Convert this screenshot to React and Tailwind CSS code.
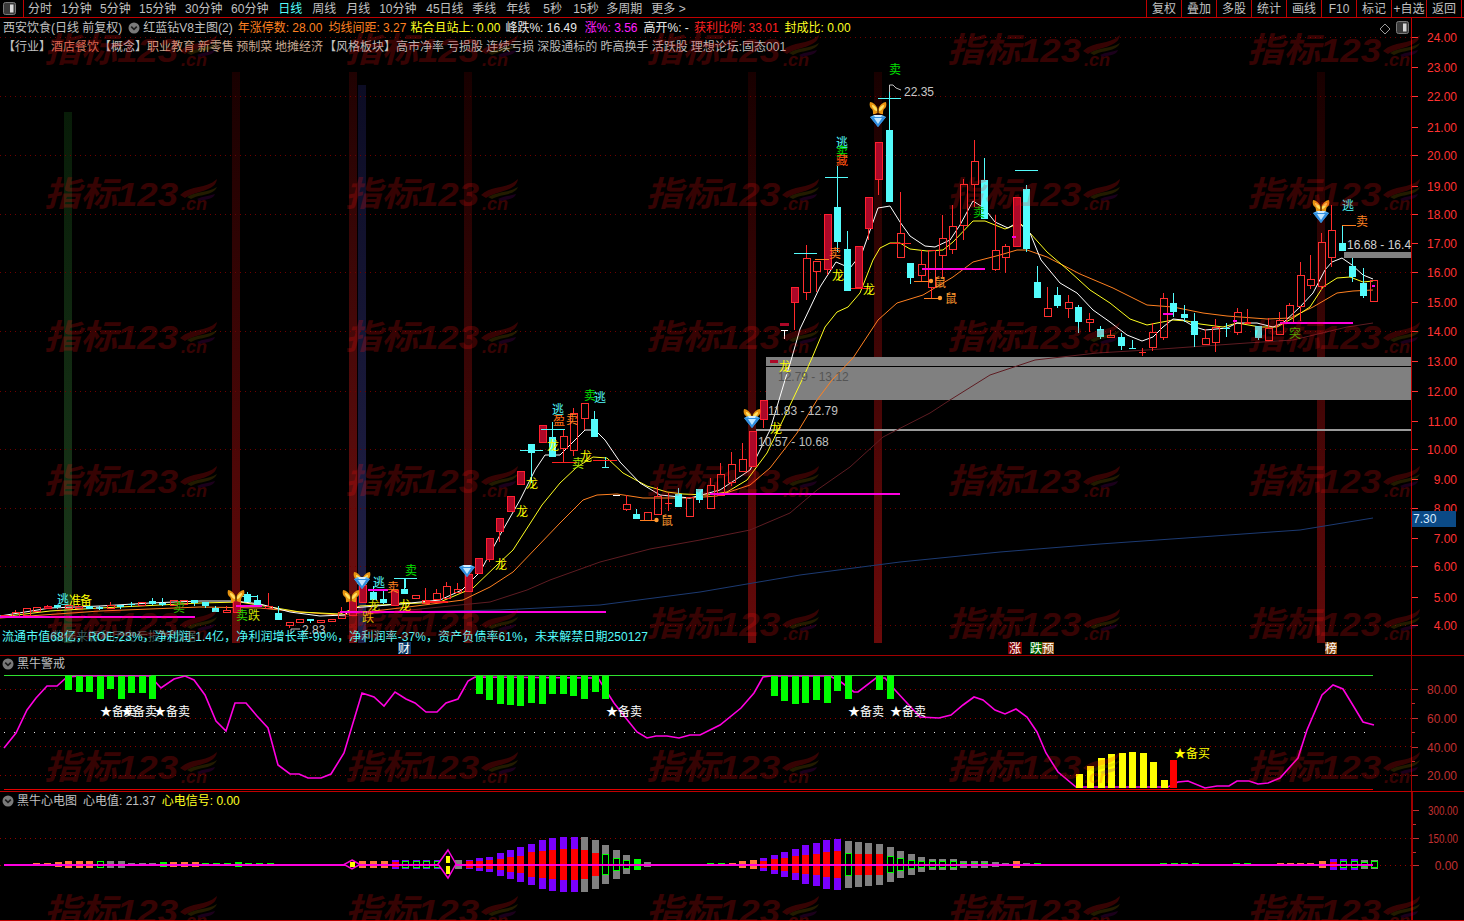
import React from "react";

const RED = "#ff3232";
const CYAN = "#54fcfc";

const candles = [
  [4,615,615,617,617,"r"],[15,610,612,616,616,"r"],[26,608,608,615,615,"r"],[36,607,607,611,611,"r"],[47,605,606,608,609,"f"],
  [57,605,605,608,609,"c"],[68,604,605,608,609,"r"],[78,605,606,608,608,"r"],[89,605,606,609,609,"c"],[99,606,607,609,610,"c"],
  [110,602,605,608,608,"r"],[120,605,605,607,609,"c"],[131,602,604,605,607,"c"],[141,602,602,605,605,"r"],[152,598,601,604,605,"c"],
  [162,598,603,605,606,"c"],[173,600,600,605,605,"r"],[183,600,600,604,604,"r"],[194,600,600,603,606,"c"],[205,602,602,606,608,"c"],
  [215,606,608,612,612,"c"],[226,606,610,612,612,"r"],[236,597,597,612,613,"f"],[247,592,594,602,602,"c"],[257,595,600,605,605,"c"],
  [268,593,606,608,608,"r"],[278,606,613,620,620,"c"],[289,622,622,625,628,"r"],[299,619,619,622,622,"r"],[310,619,619,621,623,"c"],
  [320,620,620,622,622,"r"],[331,619,619,621,621,"r"],[341,607,612,618,618,"r"],[352,598,598,615,615,"f"],[362,585,585,602,602,"f"],
  [373,586,592,600,600,"c"],[383,590,599,603,604,"c"],[394,590,590,605,605,"f"],[404,578,589,594,594,"c"],[415,595,595,598,598,"r"],
  [425,588,600,603,603,"r"],[436,589,593,599,599,"r"],[446,582,586,598,598,"r"],[457,583,589,592,592,"r"],[468,574,574,591,591,"f"],
  [478,558,558,573,573,"f"],[489,538,538,559,562,"f"],[499,518,518,531,542,"f"],[510,496,496,511,511,"f"],[520,471,471,484,484,"f"],
  [531,444,444,453,483,"c"],[542,425,425,442,442,"f"],[552,422,437,457,457,"c"],[563,430,436,448,463,"r"],[573,408,413,450,456,"r"],
  [584,403,403,418,430,"r"],[594,411,419,437,437,"c"],[605,457,467,468,468,"c"],[616,495,495,496,496,"w"],[626,495,504,509,511,"r"],
  [636,509,514,519,519,"c"],[647,512,512,520,520,"r"],[657,487,496,514,514,"r"],[668,493,503,503,511,"r"],[678,488,494,507,507,"c"],
  [689,497,497,516,516,"r"],[699,489,489,500,503,"c"],[710,478,485,508,508,"r"],[720,463,474,495,495,"r"],[731,452,464,482,486,"r"],
  [742,443,459,471,471,"r"],[752,431,431,466,466,"f"],[763,400,400,419,428,"f"],
  [794,287,287,302,330,"f"],[806,245,258,292,300,"r"],[816,261,261,271,292,"r"],[827,214,214,269,275,"f"],[837,166,207,242,252,"c"],
  [847,231,249,291,291,"c"],[858,246,246,287,287,"f"],[868,197,197,228,240,"f"],[878,142,142,179,195,"f"],[889,85,130,202,202,"c"],
  [900,192,233,257,257,"r"],[910,263,263,278,284,"c"],[921,250,264,275,282,"r"],[931,250,250,287,298,"r"],[942,215,238,255,277,"r"],
  [952,205,226,249,254,"r"],[963,179,184,225,240,"r"],[974,140,161,184,207,"r"],[984,158,180,219,219,"c"],[995,215,250,269,271,"r"],
  [1005,244,246,257,273,"r"],[1016,197,197,246,246,"f"],[1026,185,189,249,252,"c"],[1037,266,282,298,298,"c"],[1047,287,308,316,316,"r"],
  [1057,287,295,306,308,"c"],[1068,295,302,308,318,"r"],[1078,305,307,322,333,"c"],[1089,313,319,322,332,"r"],[1100,326,329,337,339,"c"],
  [1110,330,335,337,337,"r"],[1121,333,337,346,350,"c"],[1132,340,348,349,349,"c"],[1142,348,352,352,356,"r"],[1152,323,332,347,351,"r"],
  [1163,293,298,337,340,"r"],[1173,293,303,312,317,"c"],[1184,305,314,318,322,"c"],[1194,313,321,335,347,"c"],[1205,329,338,344,344,"r"],
  [1215,319,327,342,352,"r"],[1226,323,328,329,337,"c"],[1237,308,312,332,335,"r"],[1247,309,323,324,324,"r"],[1258,326,326,338,340,"c"],
  [1268,318,328,340,340,"r"],[1279,312,320,334,334,"r"],[1289,303,305,322,322,"r"],[1300,262,275,306,321,"r"],[1310,255,279,285,289,"r"],
  [1321,233,242,286,290,"r"],[1331,205,230,257,267,"r"],[1342,225,243,251,251,"c"],[1352,258,266,277,282,"c"],[1363,268,283,296,298,"c"],
  [1373,280,280,301,301,"r"],
];

const white = "0,616 50,608 100,606 150,603 200,601 235,601 260,604 290,612 320,616 345,615 352,608 400,604 440,600 462,590 480,572 500,535 520,500 535,470 545,455 560,455 575,440 585,430 595,430 605,440 620,462 640,483 660,495 690,498 720,490 750,470 770,430 785,380 792,357 800,329 820,287 836,262 850,268 862,253 878,208 890,206 900,222 910,236 925,246 935,247 950,240 960,225 973,201 984,208 995,222 1008,228 1018,222 1030,233 1041,260 1060,283 1077,293 1093,310 1110,322 1127,335 1142,341 1153,337 1163,327 1173,319 1183,320 1195,327 1205,330 1227,328 1237,323 1257,323 1273,327 1283,323 1300,307 1313,293 1325,270 1332,262 1342,258 1352,265 1363,275 1373,279";
const yellow = "0,617 50,611 100,608 200,603 240,602 270,607 300,612 340,614 360,606 400,604 440,602 473,588 497,565 513,550 542,505 560,483 577,467 593,457 607,458 623,473 647,486 667,492 683,494 707,495 727,492 747,480 767,453 783,420 802,380 812,358 825,327 837,312 848,307 860,293 873,260 880,248 890,243 900,243 910,249 927,251 943,250 953,242 973,221 985,221 1005,229 1020,223 1030,233 1047,252 1068,270 1090,290 1110,303 1130,319 1147,325 1157,323 1173,320 1187,321 1200,324 1223,327 1237,323 1260,327 1277,327 1293,318 1310,307 1323,287 1337,278 1350,277 1363,282 1373,281";
const orange = "0,618 100,611 200,607 260,608 300,612 340,615 400,608 440,603 463,600 490,587 513,572 537,547 560,523 583,500 597,495 617,494 643,498 667,498 690,498 717,496 750,485 770,468 797,433 817,400 832,380 853,358 878,320 897,303 923,295 953,277 973,262 1000,255 1017,250 1027,250 1047,257 1080,274 1113,288 1147,305 1173,307 1203,313 1227,316 1267,319 1290,318 1313,307 1337,293 1353,291 1373,290";
const maroon = "340,617 440,607 490,602 527,590 550,580 600,562 650,549 700,540 750,530 790,513 817,490 850,467 883,437 930,413 950,400 990,375 1035,360 1097,353 1147,350 1247,343 1293,340 1347,327 1373,323";
const navy = "400,612 500,610 600,605 700,592 800,575 900,562 1000,552 1100,544 1200,537 1300,530 1373,518";

const bars = [[68,112,"#081c08","#1c3a1c"],[236,72,"#180000","#660a0a"],[353,72,"#200202","#741010"],[362,85,"#0c0c24","#22224a"],[468,72,"#180000","#5a0a0a"],[752,72,"#180000","#660a0a"],[878,72,"#180000","#6c0a0a"],[1321,72,"#180000","#620a0a"]];

const hLines = [
  [237,258,596,CYAN],[394,417,578,CYAN],[520,543,450,CYAN],[541,565,429,CYAN],[794,817,253,CYAN],[825,848,177,CYAN],[878,901,98,CYAN],[1015,1038,170,CYAN],
  [552,577,462,"#ff2020"],[593,617,460,"#ff2020"],[890,911,243,"#ff2020"],[851,870,288,"#ff2020"],
  [815,829,259,"#ff8020"],[1342,1356,225,"#ff8020"],[914,931,281,"#ff8020"],[924,940,298,"#ff8020"],[640,656,520,"#ff8020"],
];
const magentaLines = [[0,195,617],[236,262,606],[340,606,612.5],[710,900,494.5],[922,985,269],[1280,1353,323],[1163,1173,314],[1233,1237,321],[1372,1375,286],[1012,1016,237],[368,388,590]];

const labels = [
  [57,599,"逃",CYAN],[69,600,"准","#ffff00"],[80,600,"备","#ffff00"],[173,607,"卖","#30b000"],[236,615,"卖","#30d000"],[248,615,"跌","#d0e000"],
  [405,570,"卖","#00e000"],[387,587,"卖","#ff8020"],[373,582,"逃",CYAN],[399,605,"龙","#ffff00"],[362,617,"跌","#e0c000"],[368,605,"龙","#e0e000"],
  [552,409,"逃",CYAN],[553,420,"盈","#ff6a10"],[566,419,"卖","#ff8020"],[584,395,"卖","#00e000"],[594,397,"逃",CYAN],[526,483,"龙","#ffff00"],[516,511,"龙","#ffff00"],[495,564,"龙","#ffff00"],[580,456,"龙","#ffff00"],[572,463,"卖","#a0e000"],[547,445,"龙","#ffff00"],
  [661,520,"鼠","#ff9a30"],[770,428,"龙","#ffff00"],[779,366,"龙","#ffff00"],
  [889,69,"卖","#00e000"],[836,142,"逃",CYAN],[836,151,"卖","#00e000"],[836,160,"藏","#ff5010"],[829,253,"卖","#ff8020"],[832,275,"龙","#ffff00"],[863,289,"龙","#ffff00"],[973,212,"卖","#00c000"],
  [934,282,"鼠","#ff9a30"],[945,298,"鼠","#ff9a30"],[1342,205,"逃",CYAN],[1356,221,"卖","#ff8020"],[1289,333,"突","#30c000"],
];

const grid = [37,96,155,214,272,331,391,449,508,566,625];
const axisMain = [[24,37],[23,67],[22,96],[21,127],[20,155],[19,186],[18,214],[17,243],[16,272],[15,302],[14,331],[13,361],[12,391],[11,421],[10,449],[9,479],[8,508],[7,538],[6,566],[5,597],[4,625]];

const curve = "4,748 16,733 27,710 36,698 47,686 57,686 67,677 80,676 150,676 161,688 174,679 185,676 194,680 205,695 216,721 226,731 235,703 246,703 257,716 268,728 278,765 290,774 299,774 308,778 321,778 331,774 344,753 362,693 374,697 384,706 395,692 406,699 415,703 426,712 437,712 446,703 458,699 468,681 475,677 598,678 614,703 625,717 637,732 647,738 656,736 667,736 679,738 690,735 700,735 720,725 741,708 754,693 763,677 771,676 830,676 841,682 854,692 858,692 876,678 885,678 895,690 907,703 920,717 939,718 951,715 963,705 974,697 983,700 995,710 1005,714 1016,709 1027,717 1037,732 1046,753 1058,772 1076,787 1168,787 1178,782 1188,781 1205,788 1217,786 1229,786 1237,781 1249,781 1258,784 1268,783 1280,778 1298,758 1307,730 1322,695 1333,685 1343,689 1354,707 1363,722 1374,725";
const greenBars = [[68,690],[79,692],[89,692],[100,699],[110,689],[121,699],[131,693],[142,693],[152,699],[479,694],[489,700],[500,704],[510,705],[520,706],[531,703],[542,704],[552,694],[563,694],[573,696],[584,699],[595,692],[605,699],[774,696],[784,701],[795,704],[805,703],[816,700],[827,703],[837,691],[848,699],[879,690],[890,699]];
const yellowBars = [[1079,774],[1090,766],[1101,758],[1111,754],[1122,753],[1132,752],[1143,753],[1153,762],[1164,780]];

const O="#ff7a3c",P="#7b00ff",G="#808080",R="#ff0000",L="#00ff00";
const ecg = [
  [36,1,O],[47,1,O],[58,2,O],[68,3,O],[79,3,O],[89,3,O],[100,3,G,3,"h"],[110,3,G],[121,3,G],[131,1,G],[142,1,G],[152,1,G],[163,2,L],[173,2,O],[184,2,O],[195,2,O],[205,1,L],[216,1,L],[227,1,L],[238,2,L],[248,1,L],[259,1,L],[270,1,L],
  [362,3,O],[373,3,O],[384,3,O],[395,4,P,2,"r"],[405,4,P,3,"h"],[416,4,P,3,"h"],[426,4,P,3,"h"],[437,4,P,3,"h"],[458,4,G],[469,4,P,3,"r"],[479,6,P,3,"r"],[489,7,P,4,"r"],[500,11,P,5,"r"],[510,14,P,7,"r"],[520,17,P,8,"r"],[531,20,P,12,"r"],[542,24,P,13,"r"],[552,26,P,14,"r"],[563,27,P,15,"r"],[574,27,P,15,"r"],[584,27,G,14,"r"],[595,24,G,11,"r"],[605,19,G,10,"h"],[616,14,G,6,"h"],[626,9,G,4,"h"],[637,5,L],[647,2,G],
  [710,1,L],[721,1,L],[732,1,O],[742,3,O],[753,4,O],[763,6,P,3,"r"],[774,9,P,5,"r"],[784,12,P,6,"r"],[795,15,P,8,"r"],[805,19,P,9,"r"],[816,21,P,10,"r"],[826,24,P,12,"r"],[837,25,P,13,"r"],[848,23,G,11,"h"],[858,22,G,10,"r"],[868,21,G,10,"r"],[879,20,G,10,"r"],[890,17,G,8,"h"],[900,13,G,6,"h"],[911,10,G,4,"h"],[921,7,G,3,"h"],[932,5,G,3,"h"],[942,5,G,3,"h"],[953,5,G,3,"h"],[963,3,G,1,"h"],[974,3,G,1,"h"],[984,3,G,1,"h"],[995,2,G],[1005,1,G],[1016,3,O],[1026,1,G],[1037,1,L],
  [1163,1,L],[1174,1,L],[1184,1,L],[1195,1,L],[1236,1,L],[1247,1,L],[1280,1,O],[1290,1,O],[1300,1,O],[1310,1,O],[1322,3,O],[1333,5,P,2,"r"],[1343,5,P,3,"h"],[1354,5,P,3,"h"],[1364,4,G,2,"h"],[1374,4,G,3,"h"],
];

function Chevron() {
  return (
    <svg width="12" height="12" viewBox="0 0 12 12" className="shrink-0">
      <circle cx="6" cy="6" r="5.5" fill="#7a7a7a" />
      <path d="M3.2 4.6 6 7.4 8.8 4.6" fill="none" stroke="#1c1c1c" strokeWidth="1.6" />
    </svg>
  );
}

function WinIcon() {
  return (
    <svg width="13" height="13" viewBox="0 0 13 13">
      <rect x="0.5" y="0.5" width="12" height="12" rx="2" fill="#3a3a3a" stroke="#7a7a7a" />
      <rect x="7" y="2.5" width="3.5" height="8" fill="#d8d8d8" />
    </svg>
  );
}

function Butterfly({ x, y }) {
  return (
    <g transform={`translate(${x} ${y})`}>
      <path d="M0 5 C-2 5 -4 7 -5 6 C-5 4 -5 2 -6 1 C-8 0 -9 -3 -8 -6 C-5 -6 -2 -3 0 1 Z" fill="#e89410" />
      <path d="M0 5 C2 5 4 7 5 6 C5 4 5 2 6 1 C8 0 9 -3 8 -6 C5 -6 2 -3 0 1 Z" fill="#e89410" />
      <path d="M-1 3 C-3 3 -4 1 -5 0 C-6 -1 -6 -2 -6 -3 C-4 -3 -2 -1 -1 1 Z M1 3 C3 3 4 1 5 0 C6 -1 6 -2 6 -3 C4 -3 2 -1 1 1 Z" fill="#ffe060" />
      <rect x="-0.6" y="-2" width="1.2" height="7" fill="#3a1800" />
    </g>
  );
}

function Diamond({ x, y }) {
  return (
    <g transform={`translate(${x} ${y})`}>
      <path d="M-8 -4 L-4 -6 L4 -6 L8 -4 L0 6 Z" fill="#5ab4f4" />
      <path d="M-8 -4 L8 -4 L0 6 Z" fill="#2f8ee0" />
      <path d="M-4 -3 L4 -3 L0 3 Z" fill="#bfe6ff" />
      <path d="M-4 -6 L4 -6 L3 -4 L-3 -4 Z" fill="#d4eeff" />
    </g>
  );
}

function Lbl({ x, y, c, children, size = 12, spacing }) {
  return (
    <text x={x} y={y + 5} fill={c} fontSize={size} letterSpacing={spacing}>
      {children}
    </text>
  );
}

function Candle({ d }) {
  const [x, wt, bt, bb, wb, t] = d;
  const col = t === "c" ? CYAN : t === "w" ? "#ffffff" : "#ff2a2a";
  const left = Math.round(x - 3.5);
  const mid = left + 3.5;
  const flat = bb - bt < 2;
  return (
    <g shapeRendering="crispEdges">
      {wt < bt && <line x1={mid} x2={mid} y1={wt} y2={bt} stroke={col} />}
      {wb > bb && <line x1={mid} x2={mid} y1={bb} y2={wb} stroke={col} />}
      {flat ? (
        <line x1={left} x2={left + 7} y1={bt + 0.5} y2={bt + 0.5} stroke={col} />
      ) : t === "c" ? (
        <rect x={left} y={bt} width="7" height={bb - bt} fill={CYAN} />
      ) : t === "f" ? (
        <rect x={left + 0.5} y={bt + 0.5} width="7" height={bb - bt} fill="#ac0828" stroke="#ff2030" />
      ) : (
        <rect x={left + 0.5} y={bt + 0.5} width="7" height={bb - bt} fill="none" stroke="#ff3030" />
      )}
    </g>
  );
}

function MainSvg() {
  return (
    <svg viewBox="0 18 1411 637" width="1411" height="637" className="absolute left-0 top-0" fontWeight="400">
      <defs>
        {bars.map((b, i) => (
          <linearGradient key={i} id={`vb${i}`} x1="0" y1="0" x2="0" y2="1">
            <stop offset="0" stopColor={b[2]} />
            <stop offset="1" stopColor={b[3]} />
          </linearGradient>
        ))}
      </defs>
      {bars.map((b, i) => (
        <rect key={i} x={b[0] - 4} y={b[1]} width="8" height={643 - b[1]} fill={`url(#vb${i})`} />
      ))}
      {grid.map((y) => (
        <line key={y} x1="0" x2="1411" y1={y + 0.5} y2={y + 0.5} stroke="#6e0000" strokeDasharray="1 4" shapeRendering="crispEdges" />
      ))}
      <g shapeRendering="crispEdges">
        <rect x="766" y="357" width="645" height="43" fill="#808080" />
        <rect x="766" y="366" width="645" height="1" fill="#000000" />
        <rect x="756" y="429" width="655" height="2" fill="#9a9a9a" />
        <rect x="1344" y="252" width="67" height="6" fill="#808080" />
      </g>
      <g fill="none" strokeWidth="1">
        <polyline points={navy} stroke="#1c3a72" />
        <polyline points={maroon} stroke="#5e1c22" />
        <polyline points={orange} stroke="#ff8020" />
        <polyline points={yellow} stroke="#ffff20" />
        <polyline points={white} stroke="#ffffff" />
      </g>
      {candles.map((d, i) => (
        <Candle key={i} d={d} />
      ))}
      <g shapeRendering="crispEdges">
        <rect x="770" y="360" width="8" height="3" fill="#ac0828" />
        <rect x="780" y="323" width="9" height="3" fill="#ac0828" />
        <line x1="784.5" x2="784.5" y1="330" y2="339" stroke="#ffffff" />
        <line x1="781" x2="788" y1="330.5" y2="330.5" stroke="#ffffff" />
        {hLines.map((h, i) => (
          <line key={i} x1={h[0]} x2={h[1]} y1={h[2] + 0.5} y2={h[2] + 0.5} stroke={h[3]} />
        ))}
        <line x1="405.5" x2="405.5" y1="578" y2="588" stroke={CYAN} />
        <rect x="425" y="601" width="23" height="2" fill="#ff2020" />
        <rect x="1245" y="322" width="6" height="2" fill="#ff2020" />
        {magentaLines.map((m, i) => (
          <rect key={i} x={m[0]} y={Math.floor(m[2]) - 1} width={m[1] - m[0]} height="2" fill="#ff00e0" />
        ))}
      </g>
      <circle cx="656.5" cy="520" r="2.2" fill="#ff9a30" />
      <circle cx="931" cy="281" r="2.2" fill="#ff9a30" />
      <circle cx="940" cy="298" r="2.2" fill="#ff9a30" />
      <Butterfly x={878} y={108} />
      <Diamond x={878} y={121} />
      <Butterfly x={752} y={415} />
      <Diamond x={752} y={422} />
      <Butterfly x={1321} y={206} />
      <Diamond x={1321} y={217} />
      <Butterfly x={236} y={596} />
      <Butterfly x={351} y={596} />
      <Butterfly x={362} y={578} />
      <Diamond x={362} y={583} />
      <Diamond x={467} y={571} />
      {labels.map((l, i) => (
        <Lbl key={i} x={l[0]} y={l[1]} c={l[3]}>
          {l[2]}
        </Lbl>
      ))}
      <path d="M889.5 92 V85 H893 L896 88 L901 90" fill="none" stroke="#c0c0c0" />
      <Lbl x={904} y={91} c="#c8c8c8">22.35</Lbl>
      <path d="M291 634 V629 H300" fill="none" stroke="#c0c0c0" />
      <Lbl x={302} y={629} c="#c0c0c0">2.83</Lbl>
      <Lbl x={778} y={376} c="#555555">12.79 - 13.12</Lbl>
      <Lbl x={768} y={410} c="#c0c0c0">11.83 - 12.79</Lbl>
      <Lbl x={758} y={441} c="#c0c0c0">10.57 - 10.68</Lbl>
      <Lbl x={1347} y={244} c="#d0d0d0">16.68 - 16.4</Lbl>
      <Lbl x={52} y={636} c="#3a5a5a">数据来源和历史亏损的数据</Lbl>
      <Lbl x={2} y={636} c={CYAN} spacing={0.09}>流通市值68亿，ROE-23%，净利润-1.4亿，净利润增长率-99%，净利润率-37%，资产负债率61%，未来解禁日期250127</Lbl>
      <path d="M1385 24 L1390 29 L1385 34 L1380 29 Z" fill="none" stroke="#9a9a9a" />
      <g shapeRendering="crispEdges">
        <rect x="398" y="642" width="13" height="12" fill="#0a3a6a" />
        <rect x="1008" y="642" width="14" height="12" fill="#800000" />
        <rect x="1030" y="642" width="12" height="12" fill="#006000" />
        <rect x="1042" y="642" width="12" height="12" fill="#8a4a10" />
        <rect x="1325" y="642" width="12" height="12" fill="#8a4a10" />
      </g>
      <Lbl x={398} y={648} c="#ffffff">财</Lbl>
      <Lbl x={1009} y={648} c="#ffffff">涨</Lbl>
      <Lbl x={1030} y={648} c="#ffffff">跌</Lbl>
      <Lbl x={1042} y={648} c="#ffffff">预</Lbl>
      <Lbl x={1325} y={648} c="#ffffff">榜</Lbl>
    </svg>
  );
}

function WarnSvg() {
  return (
    <svg viewBox="0 656 1411 135" width="1411" height="135" className="absolute left-0 top-0">
      {[689, 718, 746, 775].map((y) => (
        <line key={y} x1="0" x2="1411" y1={y + 0.5} y2={y + 0.5} stroke="#900000" strokeDasharray="1 4" shapeRendering="crispEdges" />
      ))}
      <line x1="4" x2="1373" y1="732.5" y2="732.5" stroke="#e0e0e0" strokeDasharray="1 9" shapeRendering="crispEdges" />
      <line x1="4" x2="1373" y1="675.5" y2="675.5" stroke="#30e030" shapeRendering="crispEdges" />
      <line x1="4" x2="1373" y1="789.5" y2="789.5" stroke="#e00000" shapeRendering="crispEdges" />
      <polyline points={curve} fill="none" stroke="#ff00e0" strokeWidth="1.6" />
      <g shapeRendering="crispEdges">
        {greenBars.map((b, i) => (
          <rect key={i} x={b[0] - 3.5} y="676" width="7" height={b[1] - 676} fill="#00ff00" />
        ))}
        {yellowBars.map((b, i) => (
          <rect key={i} x={b[0] - 3.5} y={b[1]} width="7" height={788 - b[1]} fill="#ffff00" />
        ))}
        <rect x="1170" y="760" width="7" height="28" fill="#ff0000" />
      </g>
      {[100, 121, 154, 606, 848, 890].map((x) => (
        <Lbl key={x} x={x} y={711} c="#ffffff">★备卖</Lbl>
      ))}
      <Lbl x={1174} y={753} c="#ffff00">★备买</Lbl>
    </svg>
  );
}

function EcgSvg() {
  const y0 = 864;
  return (
    <svg viewBox="0 792 1411 128" width="1411" height="128" className="absolute left-0 top-0">
      {[838, 865].map((y) => (
        <line key={y} x1="0" x2="1411" y1={y + 0.5} y2={y + 0.5} stroke="#900000" strokeDasharray="1 4" shapeRendering="crispEdges" />
      ))}
      <g shapeRendering="crispEdges">
        {ecg.map((b, i) => {
          const [x, h, col, ih, kind] = b;
          const l = Math.round(x - 3.5);
          return (
            <g key={i}>
              <rect x={l} y={y0 - h} width="7" height={h * 2 + 1} fill={col} />
              {kind === "r" && <rect x={l} y={y0 - ih} width="7" height={ih * 2 + 1} fill={R} />}
              {kind === "h" && <rect x={l + 0.5} y={y0 - ih + 0.5} width="6" height={ih * 2} fill="#000000" stroke={L} />}
            </g>
          );
        })}
      </g>
      <rect x="4" y="863.5" width="1369" height="2" fill="#ff00e0" shapeRendering="crispEdges" />
      <path d="M448 850 L456 864 L448 878 L438 864 Z" fill="#000000" stroke="#ff00e0" strokeWidth="1.5" />
      <rect x="446" y="856" width="4" height="18" fill="#ffff00" shapeRendering="crispEdges" />
      <rect x="446" y="863" width="4" height="3" fill="#000000" shapeRendering="crispEdges" />
      <path d="M352 860 L360 864.5 L352 869 L344 864.5 Z" fill="#000000" stroke="#ff00e0" strokeWidth="1.5" />
      <rect x="350" y="862" width="5" height="5" fill="#ffff00" shapeRendering="crispEdges" />
    </svg>
  );
}

function Axis({ items, top, height, color, minor = [] }) {
  return (
    <svg viewBox={`1412 ${top} 52 ${height}`} width="52" height={height} className="block">
      {items.map(([label, y]) => (
        <g key={label}>
          <line x1="1412" x2="1418" y1={y + 0.5} y2={y + 0.5} stroke={color} shapeRendering="crispEdges" />
          {label.length === 6 ? (
            <text x="1427" y={y + 4.5} fill={color} fontSize="12" textLength="30" lengthAdjust="spacingAndGlyphs">
              {label}
            </text>
          ) : (
            <text x="1457" y={y + 4.5} fill={color} fontSize="12" textAnchor="end">
              {label}
            </text>
          )}
        </g>
      ))}
      {minor.map((y) => (
        <line key={y} x1="1412" x2="1415" y1={y + 0.5} y2={y + 0.5} stroke={color} shapeRendering="crispEdges" />
      ))}
    </svg>
  );
}

function Watermark() {
  const cols = [47, 348, 649, 950, 1250];
  const rows = [62, 206, 349, 493, 636, 779, 923];
  return (
    <svg viewBox="0 0 1464 921" width="1464" height="921" className="absolute left-0 top-0 pointer-events-none">
      {rows.map((y) =>
        cols.map((x) => (
          <g key={`${x}-${y}`} transform={`translate(${x} ${y})`} opacity="0.21">
            <text x="-3" y="0" fontSize="34" fontWeight="700" fontStyle="italic" fill="#ff1010" textLength="134" lengthAdjust="spacingAndGlyphs">
              指标123
            </text>
            <text x="134" y="4" fontSize="18" fontWeight="700" fontStyle="italic" fill="#ff1010">
              .cn
            </text>
            <path d="M133 -11 C145 -22 158 -16 170 -27 C168 -14 150 -16 138 -8 Z" fill="#ff1010" />
            <path d="M140 -9 C150 -15 160 -13 170 -19 C166 -10 152 -12 144 -7 Z" fill="#a08000" />
            <path d="M150 -7 C156 -10 162 -10 168 -12 C166 -6 158 -7 153 -5 Z" fill="#800080" />
          </g>
        ))
      )}
    </svg>
  );
}

const tabs = [
  ["分时","ml-[4px]"],["1分钟","ml-[9px]"],["5分钟","ml-[8.3px]"],["15分钟","ml-[8.3px]"],["30分钟","ml-[8.7px]"],["60分钟","ml-[8.7px]"],["日线","ml-[9.7px]"],["周线","ml-[10px]"],["月线","ml-[10px]"],["10分钟","ml-[9px]"],["45日线","ml-[9.7px]"],["季线","ml-[8.7px]"],["年线","ml-[10px]"],["5秒","ml-[13px]"],["15秒","ml-[11.3px]"],["多周期","ml-[7.7px]"],["更多 >","ml-[9px]"],
];
const rightTabs = ["复权","叠加","多股","统计","画线","F10","标记","+自选","返回"];

export default function App() {
  return (
    <div className="relative w-[1464px] h-[921px] overflow-hidden bg-black text-[12px] leading-none text-[#c0c0c0] font-['Liberation_Sans','Noto_Sans_CJK_SC',sans-serif]">
      <div className="flex h-[18px] items-center border-b border-[#c00000]">
        <div className="flex h-full w-[24px] items-center justify-center border-r border-[#c00000] pr-[4px]">
          <WinIcon />
        </div>
        <div className="flex">
          {tabs.map(([t, m]) => (
            <span key={t} className={t === "日线" ? `${m} text-[#54fcfc]` : m}>
              {t}
            </span>
          ))}
        </div>
        <div className="ml-auto mr-[2px] flex h-full border-r border-[#c00000]">
          {rightTabs.map((t) => (
            <div key={t} className="flex h-full w-[35px] items-center justify-center border-l border-[#c00000]">
              {t}
            </div>
          ))}
        </div>
      </div>

      <div className="flex h-[638px] border-b border-[#a00000]">
        <div className="relative w-[1411px] shrink-0">
          <MainSvg />
          <div className="relative flex h-[20px] items-center pl-[3px] whitespace-nowrap">
            <span>西安饮食(日线 前复权)</span>
            <span className="ml-[6px]"><Chevron /></span>
            <span className="ml-[3px]">红蓝钻V8主图(2)</span>
            <span className="ml-[5px] text-[#ff8020]">年涨停数: 28.00</span>
            <span className="ml-[6px] text-[#ff8020]">均线间距: 3.27</span>
            <span className="ml-[4px] text-[#ffff20]">粘合且站上: 0.00</span>
            <span className="ml-[5px] text-[#e8e8e8]">峰跌%: 16.49</span>
            <span className="ml-[8px] text-[#ff20ff]">涨%: 3.56</span>
            <span className="ml-[6px] text-[#e8e8e8]">高开%: -</span>
            <span className="ml-[5px] text-[#ff2020]">获利比例: 33.01</span>
            <span className="ml-[6px] text-[#ffff20]">封成比: 0.00</span>
            <span className="absolute left-[1396px] top-[3px]"><WinIcon /></span>
          </div>
          <div className="relative flex h-[18px] items-center pl-[3px] whitespace-nowrap">
            <span>【行业】</span>
            <span className="text-[#d07860]">酒店餐饮</span>
            <span>【概念】</span>
            <span className="text-[#c8a890] [word-spacing:-0.7px]">职业教育 新零售 预制菜 地摊经济</span>
            <span className="ml-[1px]">【风格板块】</span>
            <span className="text-[#b8b8b8] [word-spacing:-0.2px]">高市净率 亏损股 连续亏损 深股通标的 昨高换手 活跃股 理想论坛:固态001</span>
          </div>
        </div>
        <div className="relative flex-1 border-l border-[#c00000]">
          <Axis items={axisMain.map(([v, y]) => [`${v}.00`, y])} top={18} height={637} color={RED} />
          <div className="absolute left-0 top-[493px] flex h-[16px] w-[44px] items-center bg-[#0b4a86] pl-[1px] text-[#d8ecff]">7.30</div>
        </div>
      </div>

      <div className="flex h-[136px] border-b border-[#c00000]">
        <div className="relative w-[1411px] shrink-0">
          <WarnSvg />
          <div className="relative flex h-[16px] items-center gap-[3px] pl-[2px]">
            <Chevron />
            <span>黑牛警戒</span>
          </div>
        </div>
        <div className="flex-1 border-l border-[#a00000]">
          <Axis items={[["80.00", 689], ["60.00", 718], ["40.00", 747], ["20.00", 775]]} top={656} height={135} color="#c03030" minor={[703, 732, 761]} />
        </div>
      </div>

      <div className="flex h-[129px] border-b border-[#c00000]">
        <div className="relative w-[1411px] shrink-0">
          <EcgSvg />
          <div className="relative flex h-[17px] items-center gap-[3px] pl-[2px] whitespace-nowrap">
            <Chevron />
            <span>黑牛心电图</span>
            <span className="ml-[3px]">心电值: 21.37</span>
            <span className="ml-[3px] text-[#ffff20]">心电信号: 0.00</span>
          </div>
        </div>
        <div className="flex-1 border-l-2 border-r border-[#a00000]">
          <Axis items={[["300.00", 810], ["150.00", 838], ["0.00", 865]]} top={792} height={128} color="#c03030" minor={[824, 852]} />
        </div>
      </div>

      <Watermark />
    </div>
  );
}
